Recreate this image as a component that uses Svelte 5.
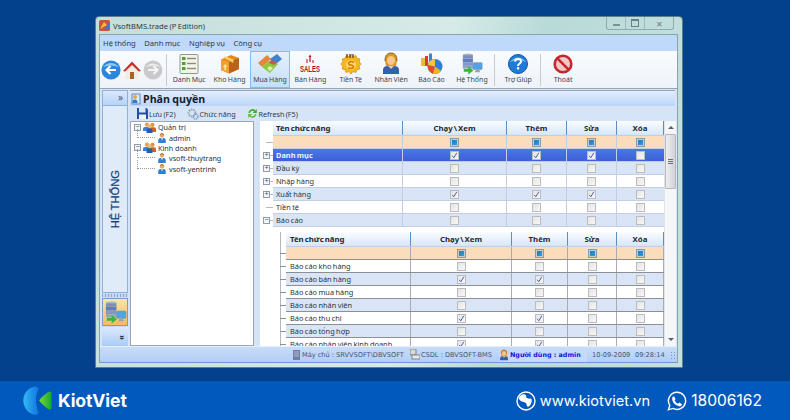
<script>
  const menus = ['Hệ thống', 'Danh mục', 'Nghiệp vụ', 'Công cụ']
  const tools = [
    { id: 'list', label: 'Danh Mục' },
    { id: 'box', label: 'Kho Hàng' },
    { id: 'buy', label: 'Mua Hàng', active: true },
    { id: 'sales', label: 'Bán Hàng' },
    { id: 'money', label: 'Tiền Tệ' },
    { id: 'staff', label: 'Nhân Viên' },
    { id: 'chart', label: 'Báo Cáo' },
    { id: 'system', label: 'Hệ Thống' }
  ]
  const tree = [
    { name: 'Quản trị', group: true },
    { name: 'admin' },
    { name: 'Kinh doanh', group: true },
    { name: 'vsoft-thuytrang' },
    { name: 'vsoft-yentrinh' }
  ]
  const headers = ['Chạy \\ Xem', 'Thêm', 'Sửa', 'Xóa']
  const mainRows = [
    { name: 'Danh mục', on: [1, 1, 1, 0], expand: 'plus', selected: true },
    { name: 'Đầu kỳ', on: [0, 0, 0, 0], expand: 'plus', alt: true },
    { name: 'Nhập hàng', on: [0, 0, 0, 0], expand: 'plus' },
    { name: 'Xuất hàng', on: [1, 1, 1, 0], expand: 'plus', alt: true },
    { name: 'Tiền tệ', on: [0, 0, 0, 0] },
    { name: 'Báo cáo', on: [0, 0, 0, 0], expand: 'minus', alt: true }
  ]
  const subRows = [
    { name: 'Báo cáo kho hàng', on: [0, 0, 0, 0] },
    { name: 'Báo cáo bán hàng', on: [1, 1, 0, 0], alt: true },
    { name: 'Báo cáo mua hàng', on: [0, 0, 0, 0] },
    { name: 'Báo cáo nhân viên', on: [0, 0, 0, 0], alt: true },
    { name: 'Báo cáo thu chi', on: [1, 1, 0, 0] },
    { name: 'Báo cáo tổng hợp', on: [0, 0, 0, 0], alt: true },
    { name: 'Báo cáo nhân viên kinh doanh', on: [1, 1, 0, 0] }
  ]
</script>

{#snippet person(size)}
  <svg width={size} height={size} viewBox="0 0 12 12">
    <circle cx="6" cy="3" r="2.6" fill="#e8a860" />
    <path d="M3.4 2.6Q6 -.4 8.6 2.6L8 1.2 6 .4 4 1.2Z" fill="#7a4a20" />
    <path d="M1.5 12V8.5Q1.5 6 4.5 6H7.5Q10.5 6 10.5 8.5V12Z" fill="#2f7fd8" />
    <path d="M5 6L6 9 7 6Z" fill="#fff" />
  </svg>
{/snippet}

{#snippet group()}
  <svg width="13" height="11" viewBox="0 0 13 11">
    <circle cx="4" cy="2.6" r="2.2" fill="#e2a25a" />
    <path d="M0 9V6.5Q0 5 2 5H6Q7 5 7 7V9Z" fill="#3d7fd0" />
    <circle cx="9.5" cy="2.8" r="2.1" fill="#d99545" />
    <path d="M6 10V7Q6 5.2 8 5.2H11Q13 5.2 13 7V10Z" fill="#c8662a" />
    <circle cx="6.5" cy="4.2" r="1.9" fill="#f0b870" />
    <path d="M3.5 11V8.6Q3.5 6.6 5.5 6.6H7.5Q9.5 6.6 9.5 8.6V11Z" fill="#1f5fb0" />
  </svg>
{/snippet}

{#snippet systemIcon(size)}
  <svg width={size} height={size} viewBox="0 0 24 24">
    <ellipse cx="7.5" cy="2.5" rx="5.5" ry="2" fill="#a8b4cc" />
    <rect x="2" y="2.5" width="11" height="3.5" fill="#7c8fb4" />
    <rect x="2" y="6" width="11" height="4" fill="#5d7fc0" />
    <rect x="2" y="10" width="11" height="4" fill="#7f99c8" />
    <rect x="2" y="14" width="11" height="3" fill="#94a4c0" />
    <rect x="13" y="10.5" width="10" height="7.5" rx="1" fill="#4fa3e6" stroke="#8a9aa8" stroke-width=".8" />
    <path d="M16 18.5h4l1 2.5h-6z" fill="#9aa4ac" />
    <path d="M3 17.5H8V14.5L13.5 19 8 23.5V20.5H3Z" fill="#35b83c" />
  </svg>
{/snippet}

{#snippet toolIcon(id)}
  {#if id === 'list'}
    <svg width="20" height="20" viewBox="0 0 20 20">
      <rect x="1" y="0.5" width="18" height="19" rx="1" fill="#f3f3ea" stroke="#8e9a8c" />
      {#each [3, 8, 13] as y}
        <rect x="3" {y} width="3.5" height="3" fill="#4da23a" />
        <path d="M8 {y + 1.5}H17" stroke="#8b8b78" stroke-width="1.4" />
      {/each}
    </svg>
  {:else if id === 'box'}
    <svg width="20" height="20" viewBox="0 0 20 20">
      <path d="M1 5.5L11 1 19 4V15L9 19.5 1 16Z" fill="#e58a1e" />
      <path d="M9 8L19 4V15L9 19.5Z" fill="#b9631a" />
      <path d="M1 5.5L9 8V19.5L1 16Z" fill="#f3a02f" />
      <path d="M5 2.2L13.4 5.6 13.4 9 10 7 4 4Z" fill="#ffcf6a" />
      <path d="M3 13l2.2-3 2.2 3H6v3H4.4v-3z" fill="#ffe98a" />
    </svg>
  {:else if id === 'buy'}
    <svg width="26" height="22" viewBox="0 0 26 22">
      <path d="M1 10L10 2 14 6 5 14Z" fill="#e9853a" />
      <path d="M13 6L20 1 25 6 18 12Z" fill="#3f83cf" />
      <path d="M5 14L12 8 21 11 13 20Z" fill="#8dc63f" />
      <path d="M14 7l6 2-3 3-5-2z" fill="#c95a4a" />
      <path d="M10 15l3-2 3 2-3 3.5z" fill="#d8f2a0" />
    </svg>
  {:else if id === 'sales'}
    <svg width="24" height="20" viewBox="0 0 24 20">
      <path d="M12 .5L13.4 3H12.6V8H11.4V3H10.6Z" fill="#b8101c" />
      <path d="M9 9V5M15 9V6" stroke="#b8101c" />
      <text x="12" y="18" text-anchor="middle" textLength="20" lengthAdjust="spacingAndGlyphs" class="sales">SALES</text>
    </svg>
  {:else if id === 'money'}
    <svg width="22" height="22" viewBox="0 0 22 22">
      <path d="M11 1l2 2.4 3-.8.8 2.6 3 .8-.6 3 2 2-2 2 .6 3-3 .8-.8 2.6-3-.8L11 21l-2-2.4-3 .8-.8-2.6-3-.8.6-3-2-2 2-2-.6-3 3-.8.8-2.6 3 .8z" fill="#f4b71c" stroke="#d98a12" stroke-width=".7" />
      <circle cx="11" cy="12" r="5" fill="#ffd860" />
      <path d="M14 9.5Q11 7.5 8.8 9.6 7.8 11.5 11 12T13.4 14.6Q11 16.5 8 14.6" fill="none" stroke="#d9780a" stroke-width="1.5" />
      <path d="M7 5V1M10 5V1M13 5V1" stroke="#5b3a1a" stroke-width="1.2" />
    </svg>
  {:else if id === 'staff'}
    <svg width="20" height="23" viewBox="0 0 20 23">
      <path d="M4 9Q4 1 10 1T16 9L15 14H5Z" fill="#e0981e" />
      <ellipse cx="10" cy="8.5" rx="4" ry="4.6" fill="#f4c890" />
      <path d="M2 22V18Q2 14 7 14H13Q18 14 18 18V22Z" fill="#3560a8" />
      <path d="M7 14L10 17 13 14Z" fill="#e6d0a0" />
      <path d="M4 9Q4 1 10 1T16 9" fill="none" stroke="#8a5e1c" />
    </svg>
  {:else if id === 'chart'}
    <svg width="23" height="22" viewBox="0 0 23 22">
      <rect x="1" y="5" width="4" height="8" fill="#e8c02c" />
      <rect x="5" y="3" width="3" height="10" fill="#e23a2a" />
      <rect x="9" y="0.5" width="3" height="12" fill="#3f83cf" />
      <circle cx="15" cy="13.5" r="7.5" fill="#2f7fd8" />
      <path d="M15 13.5L8 12A7.5 7.5 0 0 0 13 20.8Z" fill="#e84a28" />
      <path d="M15 13.5L13 20.8A7.5 7.5 0 0 0 21 18Z" fill="#f2b51c" />
      <path d="M15 13.5V6A7.5 7.5 0 0 0 8 12Z" fill="#f0c83c" />
    </svg>
  {:else if id === 'system'}
    {@render systemIcon(22)}
  {:else if id === 'help'}
    <svg width="20" height="20" viewBox="0 0 20 20">
      <circle cx="10" cy="10" r="9.5" fill="#1e7bd8" stroke="#1458a8" />
      <path d="M2 8Q10 -1 18 8 10 4 2 8Z" fill="#8cc8f4" />
      <path d="M7 7.6Q7.4 5 10.2 5 13.2 5.2 13 7.6 12.8 9 11 10 10 10.6 10 12" fill="none" stroke="#fff" stroke-width="2" />
      <rect x="9" y="13.2" width="2.2" height="2.2" fill="#fff" />
    </svg>
  {:else if id === 'exit'}
    <svg width="20" height="20" viewBox="0 0 20 20">
      <circle cx="10" cy="10" r="8.3" fill="#f0c8c8" stroke="#c9252c" stroke-width="2.6" />
      <path d="M4.4 4.4L15.6 15.6" stroke="#c9252c" stroke-width="2.6" />
    </svg>
  {/if}
{/snippet}

{#snippet checkbox(kind)}
  <span class="check" class:partial={kind === 'partial'}>
    {#if kind === 'on'}
      <svg width="7" height="7" viewBox="0 0 7 7"><path d="M1.2 3.8L2.8 5.8 5.8 .8" fill="none" stroke="#4a5fa8" stroke-width="1" /></svg>
    {/if}
  </span>
{/snippet}

<div class="page">
  <div class="stage">
    <div class="window">
      <div class="titlebar">
        <svg width="11" height="11" viewBox="0 0 11 11">
          <rect width="11" height="11" rx="1.5" fill="#c9553a" />
          <path d="M1 9L5 2 8 5Z" fill="#f2c040" />
          <path d="M5 10L10 3V9Z" fill="#3f78c8" />
        </svg>
        <span class="app-name">VsoftBMS.trade (P Edition)</span>
        <div class="controls">
          <span class="ctl"><i class="min"></i></span>
          <span class="ctl"><i class="max"></i></span>
          <span class="ctl close">✕</span>
        </div>
      </div>

      <div class="client">
        <nav class="menu">
          {#each menus as m}<span>{m}</span>{/each}
        </nav>

        <div class="ribbon">
          <div class="nav-icons">
            <svg width="20" height="20" viewBox="0 0 20 20">
              <circle cx="10" cy="10" r="9.6" fill="#2a86e0" />
              <path d="M2 7Q10 -1 18 7 10 4 2 7Z" fill="#8fcaf6" />
              <path d="M15 10H6M9.5 6L5.5 10 9.5 14" fill="none" stroke="#fff" stroke-width="2.2" />
            </svg>
            <svg width="20" height="20" viewBox="0 0 20 20">
              <path d="M3.5 10V19H16.5V10L10 4Z" fill="#f3ece0" />
              <rect x="8" y="12" width="4" height="7" fill="#a8622c" />
              <path d="M1 11L10 1.5 19 11 16.8 11.5 10 5 3.2 11.5Z" fill="#c8322a" />
            </svg>
            <svg width="20" height="20" viewBox="0 0 20 20">
              <circle cx="10" cy="10" r="9.4" fill="#c9c9c9" />
              <path d="M2 7Q10 0 18 7 10 4 2 7Z" fill="#eee" />
              <path d="M5 10H14M10.5 6L14.5 10 10.5 14" fill="none" stroke="#f4f4f4" stroke-width="2.2" />
            </svg>
          </div>
          <span class="sep first"></span>
          {#each tools as t}
            <div class="tool" class:active={t.active}>
              <span class="tool-icon">{@render toolIcon(t.id)}</span>
              <span class="tool-label">{t.label}</span>
            </div>
          {/each}
          <span class="sep before-help"></span>
          <div class="tool wide">
            <span class="tool-icon">{@render toolIcon('help')}</span>
            <span class="tool-label">Trợ Giúp</span>
          </div>
          <span class="sep"></span>
          <div class="tool wide">
            <span class="tool-icon">{@render toolIcon('exit')}</span>
            <span class="tool-label">Thoát</span>
          </div>
        </div>

        <div class="body">
          <aside class="side">
            <div class="side-head">»</div>
            <div class="side-main"><span class="side-title">HỆ THỐNG</span></div>
            <div class="side-grip"></div>
            <div class="side-btn">{@render systemIcon(23)}</div>
            <div class="side-more">»</div>
          </aside>

          <section class="panel">
            <div class="panel-title">
              <svg width="10" height="12" viewBox="0 0 10 12">
                <rect x="1" y="1" width="8" height="10" fill="#dbe8f6" stroke="#5d8ac0" />
                <circle cx="4" cy="4" r="2" fill="#e2a25a" />
                <path d="M1.5 10V8Q1.5 6.4 4 6.4T6.5 10Z" fill="#2c7fc8" />
              </svg>
              <h2>Phân quyền</h2>
            </div>
            <div class="panel-tools">
              <span class="ptool">
                <svg width="11" height="11" viewBox="0 0 11 11">
                  <path d="M0 0H9.5L11 1.5V11H0Z" fill="#1f4fa8" />
                  <rect x="2" y="0" width="6.5" height="4.5" fill="#d9e6f6" />
                  <rect x="2" y="6.5" width="7" height="4.5" fill="#f0f4fa" />
                </svg>
                Lưu (F2)
              </span>
              <span class="ptool">
                <svg width="12" height="12" viewBox="0 0 12 12">
                  <circle cx="5" cy="5" r="3.4" fill="none" stroke="#9aa8b8" stroke-width="2" stroke-dasharray="1.6 .8" />
                  <circle cx="8.6" cy="8.6" r="2.4" fill="none" stroke="#7f9fc0" stroke-width="1.6" stroke-dasharray="1.2 .6" />
                </svg>
                Chức năng
              </span>
              <span class="ptool">
                <svg width="11" height="11" viewBox="0 0 11 11">
                  <path d="M1.5 5A4 4 0 0 1 8.4 2.4L9.8 1V5H5.8L7.2 3.6A2.4 2.4 0 0 0 3 5Z" fill="#3fa83a" />
                  <path d="M9.5 6A4 4 0 0 1 2.6 8.6L1.2 10V6H5.2L3.8 7.4A2.4 2.4 0 0 0 8 6Z" fill="#5cc04a" />
                </svg>
                Refresh (F5)
              </span>
            </div>

            <div class="panes">
              <div class="tree">
                {#each tree as node}
                  <div class="node">
                    {#if node.group}
                      <span class="box">−</span>
                      {@render group()}
                    {:else}
                      <span class="stub"></span>
                      {@render person(10)}
                    {/if}
                    <span class="node-name">{node.name}</span>
                  </div>
                {/each}
              </div>

              <div class="split"></div>

              <div class="gridwrap">
                <div class="grid">
                  <div class="row head">
                    <span class="gut"></span>
                    <span class="cell name">Tên chức năng</span>
                    {#each headers as h}<span class="cell col">{h}</span>{/each}
                  </div>
                  <div class="row all">
                    <span class="gut"><i class="tick"></i></span>
                    <span class="cell name"></span>
                    {#each headers as h}<span class="cell col">{@render checkbox('partial')}</span>{/each}
                  </div>
                  {#each mainRows as r}
                    <div class="row" class:alt={r.alt} class:selected={r.selected}>
                      <span class="gut">
                        <i class="tick"></i>
                        {#if r.expand}<span class="box">{r.expand === 'plus' ? '+' : '−'}</span>{/if}
                      </span>
                      <span class="cell name">{r.name}</span>
                      {#each r.on as v}<span class="cell col">{@render checkbox(v ? 'on' : 'off')}</span>{/each}
                    </div>
                  {/each}

                  <div class="detail">
                    <div class="row head">
                      <span class="cell name">Tên chức năng</span>
                      {#each headers as h}<span class="cell col">{h}</span>{/each}
                    </div>
                    <div class="row all">
                      <span class="cell name"></span>
                      {#each headers as h}<span class="cell col">{@render checkbox('partial')}</span>{/each}
                    </div>
                    {#each subRows as r}
                      <div class="row" class:alt={r.alt}>
                        <span class="cell name">{r.name}</span>
                        {#each r.on as v}<span class="cell col">{@render checkbox(v ? 'on' : 'off')}</span>{/each}
                      </div>
                    {/each}
                  </div>
                </div>

                <div class="scroll">
                  <span class="arrow up"></span>
                  <span class="thumb"><i></i></span>
                  <span class="arrow down"></span>
                </div>
              </div>
            </div>
          </section>
        </div>

        <footer class="status">
          <span class="st st-server">
            <svg width="9" height="10" viewBox="0 0 9 10"><rect x="1" y="0" width="7" height="10" fill="#6f7fa8" /><path d="M2 2H7M2 4H7M2 6H7" stroke="#c8d0e0" stroke-width=".7" /></svg>
            Máy chủ : SRVVSOFT\DBVSOFT
          </span>
          <span class="st st-db">
            <svg width="10" height="11" viewBox="0 0 10 11"><rect x="0" y="0" width="6" height="6" fill="#d8d8d8" stroke="#666" stroke-width=".7" /><rect x="2" y="6" width="8" height="4" fill="#e8e8e8" stroke="#666" stroke-width=".7" /></svg>
            CSDL : DBVSOFT-BMS
          </span>
          <span class="st st-user">
            {@render toolIcon('staff')}
            <b>Người dùng : admin</b>
          </span>
          <span class="st st-date">10-09-2009</span>
          <span class="st st-time">09:28:14</span>
          <span class="grip"></span>
        </footer>
      </div>
    </div>
  </div>

  <div class="brand">
    <div class="logo">
      <svg width="34" height="30" viewBox="0 0 34 30">
        <defs>
          <linearGradient id="lb" x1="0" y1="0" x2="1" y2="0"><stop offset="0" stop-color="#35b8f4" /><stop offset="1" stop-color="#0f73e0" /></linearGradient>
          <linearGradient id="lg" x1="0" y1="0" x2="1" y2="0"><stop offset="0" stop-color="#7cd92e" /><stop offset="1" stop-color="#12a83a" /></linearGradient>
        </defs>
        <path d="M13 .5C6 .8 .3 7 .3 14.5S6 28.6 13 29C13.4 29 15 28 15.8 26.8 14 23 13 19 13 14.5S14 6 15.8 3C15 1.4 13.6 .5 13 .5Z" fill="url(#lb)" />
        <path d="M28 6.5C28.6 6.5 30 7.3 30 8V23.2C30 24 28.6 25 28 24.6 25 23.5 19 18 17.8 15.6 19 13 25 7.5 28 6.5Z" fill="url(#lg)" transform="translate(-1.5 -1)" />
      </svg>
      <span class="wordmark">KiotViet</span>
    </div>
    <div class="contact">
      <svg width="20" height="20" viewBox="0 0 20 20">
        <circle cx="10" cy="10" r="9" fill="none" stroke="#fff" stroke-width="1.4" />
        <path d="M2.5 7Q5 2.8 8.4 3.2 11.2 4.5 10 6.5 12 8 15 7.5 17 10 13.6 15 11 17 10.6 14 10.8 11.6 7.6 11 3.8 10.4 2.5 7Z" fill="#fff" />
      </svg>
      <span class="site">www.kiotviet.vn</span>
      <svg class="phone" width="20" height="20" viewBox="0 0 20 20">
        <path d="M10.2 1.2A8.6 8.6 0 0 0 2.8 14.4L1.4 18.8 6 17.4A8.6 8.6 0 1 0 10.2 1.2Z" fill="none" stroke="#fff" stroke-width="1.4" />
        <path d="M7 5.2L8.6 8 7.6 9.6Q8.8 11.8 11 12.8L12.4 11.6 15 13.2Q14.6 15.2 12.8 15.4 9 15 6.6 12 4.6 9.2 5.2 6.6 5.8 5.4 7 5.2Z" fill="#fff" />
      </svg>
      <span class="tel">18006162</span>
    </div>
  </div>
</div>

<style>
  :global(body) {
    margin: 0;
  }
  .page {
    width: 790px;
    height: 420px;
    display: flex;
    flex-direction: column;
    overflow: hidden;
    font-family: "Noto Sans", "Liberation Sans", sans-serif;
    font-size: 7.4px;
    word-spacing: -0.5px;
    color: #2a3140;
  }
  .stage {
    height: 381px;
    box-sizing: border-box;
    padding: 16px 0 0 95px;
    background: #03418c;
  }
  .window {
    width: 588px;
    height: 352px;
    box-sizing: border-box;
    padding: 0 4px 4px 3px;
    border: 1px solid #5b7f8c;
    border-radius: 4px 4px 0 0;
    background: linear-gradient(100deg, #c4dedb 0%, #d6ebe8 55%, #b8dad8 70%, #c5e0dd 100%);
    display: flex;
    flex-direction: column;
  }
  .titlebar {
    height: 17px;
    display: flex;
    align-items: center;
    gap: 3px;
    flex: none;
  }
  .app-name {
    font-size: 7.6px;
    color: #2c3a40;
  }
  .controls {
    margin-left: auto;
    margin-right: 4px;
    align-self: flex-start;
    display: flex;
    height: 12px;
    border: 1px solid #90aab0;
    border-top: 0;
    border-radius: 0 0 3px 3px;
  }
  .ctl {
    width: 18px;
    display: flex;
    align-items: center;
    justify-content: center;
    border-right: 1px solid #9fb8bc;
  }
  .ctl.close {
    width: 28px;
    border-right: 0;
    font-size: 8px;
    color: #6a8088;
  }
  .min {
    width: 7px;
    height: 2px;
    margin-top: 3px;
    background: #7b8f98;
  }
  .max {
    width: 6px;
    height: 5px;
    border: 1px solid #6a8088;
    border-top-width: 2px;
  }
  .client {
    flex: 1;
    min-height: 0;
    display: flex;
    flex-direction: column;
    background: #d5e4f8;
    border: 1px solid #8aa4ac;
    border-bottom: 0;
  }
  .menu {
    height: 16px;
    flex: none;
    display: flex;
    align-items: center;
    gap: 8.5px;
    padding-left: 3px;
    background: #bfd9fb;
    font-size: 7.6px;
    color: #2e3848;
  }
  .ribbon {
    height: 38px;
    flex: none;
    display: flex;
    align-items: stretch;
    background: linear-gradient(#f9fbfe, #eef3f9);
    border-bottom: 1px solid #98a4b4;
    box-sizing: border-box;
  }
  .nav-icons {
    display: flex;
    align-items: center;
    gap: 1px;
    padding-left: 1px;
  }
  .sep {
    width: 1px;
    margin: 3px 2px 2px 2px;
    background: #c8ccd0;
    flex: none;
  }
  .sep.first {
    margin-left: 3px;
  }
  .sep.before-help {
    margin-right: 3px;
  }
  .tool {
    width: 40.4px;
    flex: none;
    box-sizing: border-box;
    display: flex;
    flex-direction: column;
    align-items: center;
    justify-content: flex-end;
    padding-bottom: 2px;
    border: 1px solid transparent;
  }
  .tool.wide {
    width: 40px;
  }
  .tool.active {
    border-color: #85bbf0;
    background: linear-gradient(#e4f0fd, #c5def8);
  }
  .tool-icon {
    height: 24px;
    display: flex;
    align-items: center;
  }
  .tool-label {
    white-space: nowrap;
    font-size: 7px;
    line-height: 10px;
    color: #3c4450;
  }
  .sales {
    font: 700 9.5px "Liberation Sans", sans-serif;
    fill: #b8101c;
  }
  .body {
    flex: 1;
    min-height: 0;
    display: flex;
    gap: 2px;
    padding: 1px 2px 0 2px;
  }
  .side {
    width: 26px;
    flex: none;
    display: flex;
    flex-direction: column;
    background: #c7daf5;
  }
  .side-head {
    height: 16px;
    flex: none;
    box-sizing: border-box;
    text-align: right;
    padding-right: 4px;
    background: linear-gradient(#dbe9fc, #b6d2f8);
    border: 1px solid #8fb0d8;
    font-size: 10px;
    line-height: 13px;
    color: #4a5a70;
  }
  .side-main {
    flex: 1;
    background: #e0ebf9;
    border: 1px solid #8fb0d8;
    border-top: 0;
    display: flex;
    align-items: center;
    justify-content: center;
  }
  .side-title {
    writing-mode: vertical-rl;
    transform: rotate(180deg);
    font: 11.2px "Liberation Sans", sans-serif;
    color: #123f7c;
    -webkit-text-stroke: 0.2px #123f7c;
    margin-top: 1px;
  }
  .side-grip {
    height: 3px;
    flex: none;
    background: repeating-linear-gradient(90deg, #8aa4c8 0 1px, transparent 1px 3px);
    margin: 1px 0;
  }
  .side-btn {
    height: 28px;
    flex: none;
    box-sizing: border-box;
    display: flex;
    align-items: center;
    justify-content: center;
    border: 1px solid #7f9cc4;
    background: linear-gradient(#fbe3a8, #f6bc5c);
  }
  .side-more {
    height: 19px;
    flex: none;
    margin-top: 1px;
    box-sizing: border-box;
    padding: 2px 0 0 0;
    background: linear-gradient(#dceafc, #a9cbf8);
    color: #111;
    font: 700 9px/12px "Liberation Sans", sans-serif;
    writing-mode: vertical-rl;
    text-align: center;
  }
  .panel {
    flex: 1;
    min-width: 0;
    display: flex;
    flex-direction: column;
    border-top: 1px solid #97a3b4;
  }
  .panel-title {
    height: 15px;
    flex: none;
    display: flex;
    align-items: center;
    gap: 2px;
    padding-left: 1px;
    background: linear-gradient(#e2edfc, #bcd6fa);
  }
  h2 {
    margin: 0;
    font: 700 10.6px "Open Sans", sans-serif;
    color: #14202e;
  }
  .panel-tools {
    height: 15px;
    flex: none;
    display: flex;
    align-items: center;
    gap: 11px;
    padding-left: 7px;
    background: #d6e4f8;
    font-size: 7.2px;
    color: #2c3a50;
  }
  .ptool {
    display: inline-flex;
    align-items: center;
    gap: 1px;
  }
  .panes {
    flex: 1;
    min-height: 0;
    display: flex;
  }
  .tree {
    width: 124px;
    flex: none;
    box-sizing: border-box;
    padding: 0 0 0 3px;
    background: #fff;
    border: 1px solid #9aa6b6;
  }
  .node {
    height: 10.4px;
    display: flex;
    align-items: center;
    gap: 2px;
    white-space: nowrap;
  }
  .stub {
    width: 18px;
    margin-left: 3px;
    height: 9px;
    margin-top: -9px;
    border-left: 1px dotted #999;
    border-bottom: 1px dotted #999;
    box-sizing: border-box;
    flex: none;
  }
  .node-name {
    font-size: 7.2px;
    word-spacing: 0;
  }
  .box {
    width: 7px;
    height: 7px;
    box-sizing: border-box;
    border: 1px solid #8f9caa;
    background: #f2f5f8;
    color: #405068;
    font: 7px/5px "Liberation Mono", monospace;
    text-align: center;
    display: inline-block;
    flex: none;
  }
  .split {
    width: 6px;
    flex: none;
    background: #d5e3f7;
  }
  .gridwrap {
    flex: 1;
    min-width: 0;
    display: flex;
    background: #fff;
  }
  .grid {
    width: 404px;
    flex: none;
    overflow: hidden;
    display: flex;
    flex-direction: column;
  }
  .row {
    height: 13px;
    flex: none;
    display: flex;
    box-sizing: border-box;
    background: #fff;
    border-bottom: 1px solid #c2cfe2;
  }
  .row.alt {
    background: #d9e5f7;
  }
  .row.all {
    background: #fcddbb;
  }
  .row.selected {
    background: linear-gradient(#4a78e6, #3c60d6);
    color: #fff;
  }
  .row.selected .name {
    color: #eaf0ff;
    font-weight: 700;
  }
  .row.head {
    height: 15px;
    background: linear-gradient(#fbfdff, #d5e6f8);
    font-size: 7.8px;
    word-spacing: -1px;
    font-weight: 700;
    color: #1d2632;
  }
  .gut {
    width: 13px;
    flex: none;
    background: #fff;
    position: relative;
    margin-bottom: -1px;
  }
  .tick {
    position: absolute;
    left: 6px;
    top: 6px;
    width: 7px;
    height: 1px;
    background: #b0b8c2;
  }
  .gut .box {
    position: absolute;
    left: 3px;
    top: 3px;
  }
  .cell {
    display: flex;
    align-items: center;
    box-sizing: border-box;
    overflow: hidden;
    white-space: nowrap;
    border-right: 1px solid #c2cfe2;
  }
  .name {
    width: 130px;
    padding-left: 3px;
  }
  .col {
    justify-content: center;
    width: 104px;
  }
  .col:nth-child(4) {
    width: 60px;
  }
  .col:nth-child(5) {
    width: 50px;
  }
  .col:nth-child(6) {
    width: 47px;
    border-right: 0;
  }
  .head .cell {
    border-right: 1px solid #5c8fc0;
  }
  .check {
    width: 9px;
    height: 9px;
    box-sizing: border-box;
    border: 1px solid #bcbcbc;
    background: linear-gradient(135deg, #e4e4e4, #f8f8f8);
    display: inline-flex;
    align-items: center;
    justify-content: center;
  }
  .check.partial {
    background: linear-gradient(135deg, #1d73b8, #3aa0d8);
    box-shadow: inset 0 0 0 1px #c4ccd4;
    border-color: #8a9aa8;
  }
  .detail {
    flex: none;
    margin: 5px 0 0 26px;
    position: relative;
    background: #fff;
  }
  .detail::before {
    content: "";
    position: absolute;
    left: -6px;
    top: 0;
    bottom: 0;
    width: 1px;
    background: #b0b8c2;
  }
  .detail .row {
    border-bottom-color: #8c8f96;
  }
  .detail .cell {
    border-right-color: #a8acb2;
  }
  .detail .row:not(.head)::before {
    content: "";
    position: absolute;
    left: -6px;
    width: 6px;
    height: 1px;
    margin-top: 6px;
    background: #8c8f96;
  }
  .detail .row.head {
    border-bottom-color: #c2cfe2;
  }
  .detail .head .cell {
    border-right-color: #5c8fc0;
  }
  .detail .name {
    width: 125px;
    padding-left: 4px;
  }
  .detail .col {
    width: 101px;
  }
  .detail .col:nth-child(3) {
    width: 56px;
  }
  .detail .col:nth-child(4) {
    width: 49px;
  }
  .detail .col:nth-child(5) {
    width: 47px;
  }
  .scroll {
    flex: 1;
    display: flex;
    flex-direction: column;
    align-items: center;
    background: #f4f6f8;
    border-left: 1px solid #dfe4ea;
  }
  .arrow {
    height: 13px;
    flex: none;
    width: 100%;
    display: flex;
    align-items: center;
    justify-content: center;
  }
  .arrow::after {
    content: "";
    border: 3px solid transparent;
  }
  .arrow.up::after {
    border-bottom-color: #55606c;
    margin-bottom: 3px;
  }
  .arrow.down {
    margin-top: auto;
  }
  .arrow.down::after {
    border-top-color: #55606c;
    margin-top: 3px;
  }
  .thumb {
    width: 9px;
    height: 53px;
    flex: none;
    border: 1px solid #b4b8bc;
    border-radius: 1px;
    background: linear-gradient(90deg, #eee, #cfd2d6);
    display: flex;
    align-items: center;
    justify-content: center;
  }
  .thumb i {
    width: 5px;
    height: 5px;
    background: repeating-linear-gradient(#6a7078 0 1px, transparent 1px 2px);
  }
  .status {
    height: 15px;
    flex: none;
    display: flex;
    align-items: center;
    background: linear-gradient(#c8dcf8, #b2cdf6);
    border-top: 1px solid #e8eef8;
    border-bottom: 1px solid #6f97d4;
    font: 6.6px "DejaVu Sans", sans-serif;
    word-spacing: 0;
    color: #3e5578;
    white-space: nowrap;
  }
  .st {
    display: inline-flex;
    align-items: center;
    gap: 1px;
    height: 100%;
    flex: none;
    box-sizing: border-box;
    overflow: hidden;
  }
  .st-server {
    margin-left: 192px;
    width: 118px;
  }
  .st-db {
    width: 89px;
  }
  .st-user {
    width: 88px;
    background: #c5d9f8;
  }
  .st-user :global(svg) {
    width: 10px;
    height: 12px;
  }
  .st-user b {
    color: #1414d8;
    font-size: 6.4px;
  }
  .st-date {
    width: 48px;
    padding-left: 5px;
  }
  .st-time {
    width: 33px;
  }
  .grip {
    width: 8px;
    height: 8px;
    margin-left: 2px;
    background: radial-gradient(#7f93b0 40%, transparent 45%) 0 0 / 3px 3px;
  }
  .brand {
    height: 39px;
    flex: none;
    display: flex;
    align-items: center;
    background: #0259bd;
    color: #fff;
    word-spacing: 0;
  }
  .logo {
    display: flex;
    align-items: center;
    margin-left: 23px;
    gap: 1px;
  }
  .wordmark {
    font: 700 17.6px "Inter", "Roboto", sans-serif;
    letter-spacing: -0.1px;
  }
  .contact {
    margin-left: auto;
    margin-right: 28px;
    display: flex;
    align-items: center;
    font-family: "Inter", "Roboto", sans-serif;
  }
  .site {
    font-size: 14.6px;
    margin-left: 4px;
  }
  .phone {
    margin-left: 17px;
  }
  .tel {
    font-size: 15.6px;
    margin-left: 4px;
  }
</style>
